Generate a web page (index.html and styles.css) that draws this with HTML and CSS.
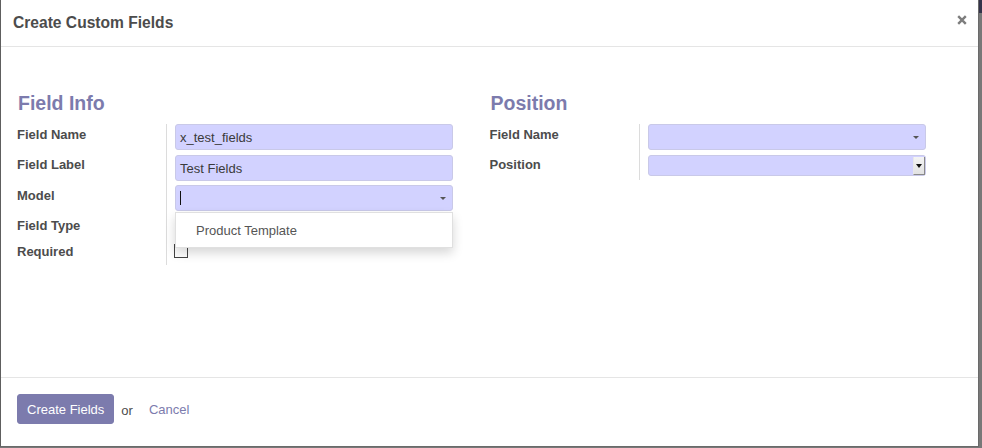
FILE: index.html
```html
<!DOCTYPE html>
<html>
<head>
<meta charset="utf-8">
<title>Create Custom Fields</title>
<link rel="stylesheet" href="styles.css">
</head>
<body>
<div class="modal">
  <header class="modal-header">
    <h4 class="modal-title">Create Custom Fields</h4>
    <button class="close" aria-label="Close">
      <svg width="10" height="10" viewBox="0 0 10 10"><path d="M1.2 1.2 L8.8 8.8 M8.8 1.2 L1.2 8.8" stroke="#7d7d7d" stroke-width="2.4" stroke-linecap="butt"/></svg>
    </button>
  </header>
  <main class="modal-body">
    <div class="cols">
      <section class="col">
        <h2 class="col-title">Field Info</h2>
        <div class="form">
          <div class="row row-first">
            <label class="lbl">Field Name</label>
            <div class="val"><div class="input">x_test_fields</div></div>
          </div>
          <div class="row">
            <label class="lbl">Field Label</label>
            <div class="val"><div class="input">Test Fields</div></div>
          </div>
          <div class="row row-first">
            <label class="lbl">Model</label>
            <div class="val">
              <div class="combo">
                <div class="input"><span class="caret-cursor"></span><span class="arrow"></span></div>
                <ul class="dropdown"><li class="dropdown-item">Product Template</li></ul>
              </div>
            </div>
          </div>
          <div class="row row-type">
            <label class="lbl">Field Type</label>
            <div class="val"><div class="select"></div></div>
          </div>
          <div class="row row-req">
            <label class="lbl">Required</label>
            <div class="val"><span class="checkbox"></span></div>
          </div>
        </div>
      </section>
      <section class="col">
        <h2 class="col-title">Position</h2>
        <div class="form">
          <div class="row row-first">
            <label class="lbl">Field Name</label>
            <div class="val"><div class="input"><span class="arrow"></span></div></div>
          </div>
          <div class="row row-pos">
            <label class="lbl">Position</label>
            <div class="val"><div class="select native"><span class="sel-btn"><span class="sel-arrow"></span></span></div></div>
          </div>
        </div>
      </section>
    </div>
  </main>
  <footer class="modal-footer">
    <button class="btn-primary">Create Fields</button>
    <span class="or">or</span>
    <a class="btn-link">Cancel</a>
  </footer>
</div>
</body>
</html>
```

FILE: styles.css
```css
* { box-sizing: border-box; }
html, body { margin: 0; padding: 0; }
body {
  width: 982px;
  height: 448px;
  overflow: hidden;
  background: linear-gradient(#34334a 0, #34334a 13px, #787878 13px);
  font-family: "Liberation Sans", Arial, sans-serif;
  font-size: 13px;
  color: #4c4c4c;
}
.modal {
  width: 979px;
  height: 447px;
  background: #fff;
  border-left: 1px solid #5e5e5e;
  border-right: 1px solid #6a6a6a;
  border-bottom: 1px solid #6a6a6a;
  display: flex;
  flex-direction: column;
}
.modal-header {
  height: 47px;
  flex: none;
  border-bottom: 1px solid #e5e5e5;
  display: flex;
  justify-content: space-between;
  align-items: flex-start;
  padding: 0 11px 0 12px;
}
.modal-title {
  margin: 0;
  font-size: 15.6px;
  font-weight: bold;
  line-height: 1.1;
  padding-top: 14px;
  color: #4c4c4c;
}
.close {
  border: 0;
  background: transparent;
  padding: 0;
  margin-top: 15px;
  width: 10px;
  height: 10px;
  line-height: 0;
}
.modal-body {
  flex: 1;
  padding: 46px 16px 0 16px;
}
.cols {
  display: flex;
}
.col {
  width: 473px;
}
.col-title {
  margin: 0 0 9px 0;
  padding-left: 1px;
  font-size: 19.5px;
  line-height: 1.1;
  font-weight: bold;
  color: #7c7bad;
  height: 22px;
}
.form {
  display: flex;
  flex-direction: column;
}
.row {
  display: flex;
}
.lbl {
  width: 149px;
  flex: none;
  font-weight: bold;
  line-height: 18px;
  padding-top: 1px;
  color: #4c4c4c;
}
.row-first .lbl {
  padding-top: 2px;
}
.val {
  border-left: 1px solid #dcdcdc;
  padding-left: 8px;
  padding-bottom: 4px;
  width: 287px;
}
.row-first .val {
  padding-bottom: 5px;
}
.input {
  position: relative;
  width: 278px;
  height: 26px;
  background: #d2d2ff;
  border: 1px solid #c9c9e8;
  border-radius: 3px;
  padding: 0 4px;
  display: flex;
  align-items: center;
  color: #3a3a3a;
}
.arrow {
  position: absolute;
  right: 6px;
  top: 11px;
  width: 0;
  height: 0;
  border-left: 3px solid transparent;
  border-right: 3px solid transparent;
  border-top: 3px solid #555;
}
.caret-cursor {
  display: block;
  width: 1px;
  height: 14px;
  background: #111;
}
.combo {
  position: relative;
}
.dropdown {
  position: absolute;
  z-index: 5;
  left: 0;
  top: 27px;
  width: 278px;
  margin: 0;
  padding: 0;
  list-style: none;
  background: #fff;
  border: 1px solid rgba(0, 0, 0, 0.12);
  box-shadow: 0 5px 10px rgba(0, 0, 0, 0.16);
}
.dropdown-item {
  line-height: 18px;
  padding: 9px 20px 7px 20px;
  color: #555;
}
.row-type .val {
  padding-bottom: 4px;
}
.select {
  width: 278px;
  height: 22px;
  background: #d2d2ff;
  border: 1px solid #c9c9e8;
  border-radius: 3px;
}
.row-req .val {
  padding-bottom: 7px;
}
.checkbox {
  display: block;
  width: 14px;
  height: 14px;
  margin-top: 2px;
  margin-left: -1px;
  border: 1px solid #444;
  background: #fff;
}
.row-pos .val {
  padding-bottom: 4px;
}
.select.native {
  height: 21px;
  position: relative;
}
.sel-btn {
  position: absolute;
  right: 0;
  top: 1px;
  width: 12px;
  height: 18px;
  background: linear-gradient(#f4f4f4, #e2e2e2);
  border-right: 1px solid #8a8a8a;
  border-bottom: 1px solid #8a8a8a;
  border-left: 1px solid #e8e8e8;
}
.sel-arrow {
  position: absolute;
  left: 2px;
  top: 7px;
  width: 0;
  height: 0;
  border-left: 3px solid transparent;
  border-right: 3px solid transparent;
  border-top: 4px solid #111;
}
.modal-footer {
  height: 69px;
  flex: none;
  border-top: 1px solid #e5e5e5;
  display: flex;
  align-items: flex-start;
  padding: 16px 16px 0 16px;
}
.btn-primary {
  height: 30px;
  padding: 0 9px;
  background: #7c7bad;
  color: #fff;
  border: 1px solid #7c7bad;
  border-radius: 3px;
  font-family: inherit;
  font-size: 13px;
}
.or {
  margin-left: 7px;
  line-height: 18px;
  margin-top: 8px;
  color: #4c4c4c;
}
.btn-link {
  margin-left: 16px;
  line-height: 18px;
  margin-top: 7px;
  color: #7c7bad;
}
```
